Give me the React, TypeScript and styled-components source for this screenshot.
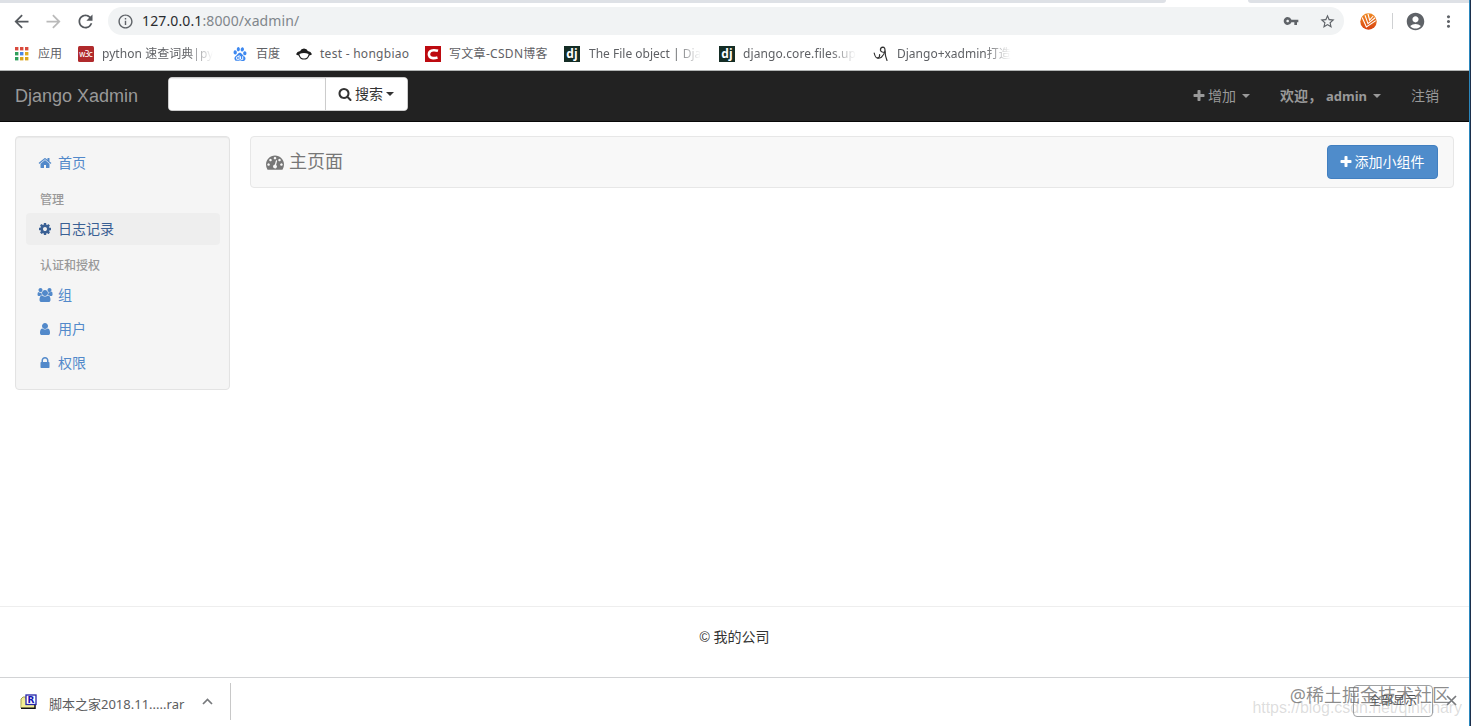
import React from 'react';
import styled, { createGlobalStyle } from 'styled-components';
import {
  MdArrowBack, MdArrowForward, MdRefresh, MdInfoOutline, MdVpnKey, MdStarBorder,
  MdAccountCircle, MdMoreVert,
} from 'react-icons/md';
import { SiBaidu } from 'react-icons/si';

const siteFont = '"Liberation Sans", "Noto Sans CJK SC", sans-serif';
const chromeFont = '"Noto Sans", "Noto Sans CJK SC", sans-serif';

const GlobalStyle = createGlobalStyle`
  * { box-sizing: border-box; }
  body { margin: 0; background: #fff; overflow: hidden; }
  svg { display: block; flex: none; }
`;

const paths = {
  plus: 'M1600 736v192q0 40-28 68t-68 28h-416v416q0 40-28 68t-68 28h-192q-40 0-68-28t-28-68v-416h-416q-40 0-68-28t-28-68v-192q0-40 28-68t68-28h416v-416q0-40 28-68t68-28h192q40 0 68 28t28 68v416h416q40 0 68 28t28 68z',
  search: 'M1216 832q0-185-131.5-316.5t-316.5-131.5-316.5 131.5-131.5 316.5 131.5 316.5 316.5 131.5 316.5-131.5 131.5-316.5zm512 832q0 52-38 90t-90 38q-54 0-90-38l-343-342q-179 124-399 124-143 0-273.5-55.5t-225-150-150-225-55.5-273.5 55.5-273.5 150-225 225-150 273.5-55.5 273.5 55.5 225 150 150 225 55.5 273.5q0 220-124 399l343 343q37 37 37 90z',
  home: 'M1472 992v480q0 26-19 45t-45 19h-384v-384h-256v384h-384q-26 0-45-19t-19-45v-480q0-1 .5-3t.5-3l575-474 575 474q1 2 1 6zm223-69l-62 74q-8 9-21 11h-3q-13 0-21-7l-692-577-692 577q-12 8-24 7-13-2-21-11l-62-74q-8-10-7-23.5t11-21.5l719-599q32-26 76-26t76 26l244 204v-195q0-14 9-23t23-9h192q14 0 23 9t9 23v408l219 182q10 8 11 21.5t-7 23.5z',
  cog: 'M1152 896q0-106-75-181t-181-75-181 75-75 181 75 181 181 75 181-75 75-181zm512-109v222q0 12-8 23t-20 13l-185 28q-19 54-39 91 35 50 107 138 10 12 10 25t-9 23q-27 37-99 108t-94 71q-12 0-26-9l-138-108q-44 23-91 38-16 136-29 186-7 28-36 28h-222q-14 0-24.5-8.5t-11.5-21.5l-28-184q-49-16-90-37l-141 107q-10 9-25 9-14 0-25-11-126-114-165-168-7-10-7-23 0-12 8-23 15-21 51-66.5t54-70.5q-27-50-41-99l-183-27q-13-2-21-12.5t-8-23.5v-222q0-12 8-23t19-13l186-28q14-46 39-92-40-57-107-138-10-12-10-24 0-10 9-23 26-36 98.5-107.5t94.5-71.5q13 0 26 10l138 107q44-23 91-38 16-136 29-186 7-28 36-28h222q14 0 24.5 8.5t11.5 21.5l28 184q49 16 90 37l142-107q9-9 24-9 13 0 25 10 129 119 165 170 7 8 7 22 0 12-8 23-15 21-51 66.5t-54 70.5q26 50 41 98l183 28q13 2 21 12.5t8 23.5z',
  user: 'M1536 1399q0 109-62.5 187t-150.5 78h-854q-88 0-150.5-78t-62.5-187q0-85 8.5-160.5t31.5-152 58.5-131 94-89 134.5-34.5q131 128 313 128t313-128q76 0 134.5 34.5t94 89 58.5 131 31.5 152 8.5 160.5zm-256-887q0 159-112.5 271.5t-271.5 112.5-271.5-112.5-112.5-271.5 112.5-271.5 271.5-112.5 271.5 112.5 112.5 271.5z',
  lock: 'M640 768h512v-192q0-106-75-181t-181-75-181 75-75 181v192zm832 96v576q0 40-28 68t-68 28h-960q-40 0-68-28t-28-68v-576q0-40 28-68t68-28h32v-192q0-184 132-316t316-132 316 132 132 316v192h32q40 0 68 28t28 68z',
  group: 'M657 896q-162 5-265 128h-134q-82 0-138-40.5t-56-118.5q0-353 124-353 6 0 43.5 21t97.5 42.5 119 21.5q67 0 133-23-5 37-5 66 0 159 90 322zm1071 637q0 120-73 189.5t-194 69.5h-874q-121 0-194-69.5t-73-189.5q0-53 3.5-103.5t14-109 26.5-108.5 43-97.5 62-81 85.5-53.5 111.5-20q10 0 43 21.5t73 48 107 48 135 21.5 135-21.5 107-48 73-48 43-21.5q61 0 111.5 20t85.5 53.5 62 81 43 97.5 26.5 108.5 14 109 3.5 103.5zm-1024-1277q0 106-75 181t-181 75-181-75-75-181 75-181 181-75 181 75 75 181zm704 384q0 159-112.5 271.5t-271.5 112.5-271.5-112.5-112.5-271.5 112.5-271.5 271.5-112.5 271.5 112.5 112.5 271.5zm576 225q0 78-56 118.5t-138 40.5h-134q-103-123-265-128 90-163 90-322 0-29-5-66 66 23 133 23 59 0 119-21.5t97.5-42.5 43.5-21q124 0 124 353zm-128-609q0 106-75 181t-181 75-181-75-75-181 75-181 181-75 181 75 75 181z',
  dashboard: 'M384 1152q0-53-37.5-90.5t-90.5-37.5-90.5 37.5-37.5 90.5 37.5 90.5 90.5 37.5 90.5-37.5 37.5-90.5zm192-448q0-53-37.5-90.5t-90.5-37.5-90.5 37.5-37.5 90.5 37.5 90.5 90.5 37.5 90.5-37.5 37.5-90.5zm428 481l101-382q6-26-7.5-48.5t-38.5-29.5-48 6.5-30 39.5l-101 382q-60 5-107 43.5t-63 98.5q-20 77 20 146t117 89 146-20 89-117q16-60-6-117t-72-91zm660-33q0-53-37.5-90.5t-90.5-37.5-90.5 37.5-37.5 90.5 37.5 90.5 90.5 37.5 90.5-37.5 37.5-90.5zm-640-640q0-53-37.5-90.5t-90.5-37.5-90.5 37.5-37.5 90.5 37.5 90.5 90.5 37.5 90.5-37.5 37.5-90.5zm448 192q0-53-37.5-90.5t-90.5-37.5-90.5 37.5-37.5 90.5 37.5 90.5 90.5 37.5 90.5-37.5 37.5-90.5zm320 448q0 261-141 483-19 29-54 29h-1402q-35 0-54-29-141-221-141-483 0-182 71-348t191-286 286-191 348-71 348 71 286 191 191 286 71 348z',
};

type IconName = keyof typeof paths;

const Icon = ({ name, size = 14 }: { name: IconName; size?: number }) => {
  const units = name === 'group' ? 2048 : 1792;
  return (
    <svg width={(size * units) / 1792} height={size} viewBox={`0 0 ${units} 1792`} fill="currentColor">
      <path d={paths[name]} />
    </svg>
  );
};

const Screen = styled.div`
  display: grid;
  grid-template-columns: 1fr 2px;
  width: 1471px;
  height: 726px;
  position: relative;
  overflow: hidden;
`;
const Window = styled.div`
  display: flex;
  flex-direction: column;
  min-width: 0;
`;
const DesktopEdge = styled.div`
  border-left: 1px solid #2b87bd;
  background: #1c2f4c;
`;

/* Browser chrome */
const TabStrip = styled.div`
  display: flex;
  justify-content: space-between;
  height: 3px;
  flex: none;
`;
const TabEdge = styled.div<{ $w: number; $side: 'left' | 'right' }>`
  width: ${p => p.$w}px;
  background: #dee1e6;
  border-radius: ${p => (p.$side === 'left' ? '0 0 4px 0' : '0 0 0 4px')};
`;
const Toolbar = styled.div`
  display: flex;
  align-items: center;
  height: 36px;
  flex: none;
  padding: 0 0 0 11px;
  color: #5f6368;
`;
const NavButton = styled.span<{ $faded?: boolean }>`
  width: 32px;
  color: ${p => (p.$faded ? '#bababa' : '#55595e')};
`;
const AddressBar = styled.div`
  display: flex;
  align-items: center;
  width: 1236px;
  height: 28px;
  margin-left: 1px;
  padding: 0 8px 0 9px;
  border-radius: 14px;
  background: #f1f3f4;
`;
const Url = styled.span`
  flex: 1;
  margin-left: 8px;
  font: 14px/20px ${chromeFont};
  letter-spacing: 0.12px;
  color: #80868b;
  b { font-weight: 400; color: #2a2c2f; }
`;
const AddressActions = styled.div`
  display: flex;
  gap: 20px;
  align-items: center;
`;
const Extensions = styled.div`
  display: flex;
  align-items: center;
  margin-left: 16px;
`;
const Divider = styled.i`
  width: 1px;
  height: 16px;
  margin: 0 12px 0 15px;
  background: #cfd1d3;
`;
const MenuSlot = styled.span`
  margin-left: 13px;
`;
const BookmarkBar = styled.div`
  display: flex;
  align-items: center;
  height: 32px;
  flex: none;
  padding: 0 0 2px 15px;
  border-bottom: 1px solid #b2b5b4;
`;
const Bookmark = styled.div<{ $w: number }>`
  display: flex;
  align-items: center;
  width: ${p => p.$w}px;
`;
const BookmarkIcon = styled.span<{ $w: number }>`
  width: ${p => p.$w}px;
  flex: none;
`;
const BookmarkLabel = styled.span<{ $fade?: boolean; $track?: number }>`
  white-space: nowrap;
  font: 12px/18px ${chromeFont};
  letter-spacing: ${p => p.$track ?? 0}px;
  color: #5f6165;
  ${p => p.$fade && 'mask-image: linear-gradient(to right, #000 calc(100% - 26px), transparent);'}
`;

/* Site navigation */
const Navbar = styled.header`
  display: flex;
  align-items: center;
  height: 51px;
  flex: none;
  padding: 0 30px 0 15px;
  background: #222;
  border-bottom: 1px solid #080808;
  font: 14px/20px ${siteFont};
  color: #999;
`;
const Brand = styled.div`
  width: 153px;
  font-size: 18px;
`;
const SearchGroup = styled.div`
  display: flex;
  width: 240px;
  height: 34px;
  margin-bottom: 4px;
  border-radius: 4px;
  background: #fff;
  border: 1px solid #ccc;
  overflow: hidden;
`;
const SearchInput = styled.input`
  width: 157px;
  border: 0;
  border-right: 1px solid #ccc;
  padding: 0 12px;
  box-shadow: inset 0 1px 1px rgba(0, 0, 0, 0.075);
`;
const SearchButton = styled.button`
  flex: 1;
  display: flex;
  align-items: center;
  justify-content: center;
  gap: 3px;
  padding: 0 1px 0 0;
  border: 0;
  background: #fff;
  color: #333;
  font: 14px/20px ${siteFont};
`;
const Caret = styled.i`
  border: 4px solid transparent;
  border-top-color: currentColor;
  border-bottom: 0;
`;
const UserMenu = styled.nav`
  display: flex;
  gap: 30px;
  margin-left: auto;
`;
const MenuItem = styled.span<{ $bold?: boolean }>`
  display: flex;
  align-items: center;
  gap: ${p => (p.$bold ? 6 : 2)}px;
  font-weight: ${p => (p.$bold ? 700 : 400)};
  white-space: nowrap;
  ${Caret} { margin-left: ${p => (p.$bold ? 0 : 4)}px; }
`;
const Welcome = styled.span`
  display: flex;
  gap: 4px;
  b { font: 700 13px/20px ${chromeFont}; letter-spacing: 0; }
`;

/* Page content */
const Content = styled.main`
  display: flex;
  align-items: flex-start;
  gap: 20px;
  height: 484px;
  flex: none;
  padding: 14px 15px 0;
  font: 14px/20px ${siteFont};
`;
const Sidebar = styled.aside`
  width: 215px;
  height: 254px;
  padding: 10px 9px 0 10px;
  background: #f5f5f5;
  border: 1px solid #e3e3e3;
  border-radius: 4px;
  box-shadow: inset 0 1px 1px rgba(0, 0, 0, 0.05);
`;
const SideHeading = styled.div`
  height: 33px;
  margin-top: -1px;
  padding: 11px 15px 0 14px;
  font-size: 12px;
  line-height: 18px;
  font-weight: 500;
  color: #999;
`;
const SideLink = styled.a<{ $active?: boolean }>`
  display: flex;
  align-items: center;
  height: 32px;
  margin-bottom: 2px;
  padding-left: 10px;
  border-radius: 4px;
  color: ${p => (p.$active ? '#3a6094' : '#5289ca')};
  background: ${p => (p.$active ? '#eee' : 'transparent')};
`;
const SideIcon = styled.span`
  display: flex;
  justify-content: center;
  width: 18px;
  margin-right: 4px;
`;
const PageHeader = styled.section`
  display: flex;
  align-items: center;
  justify-content: space-between;
  flex: 1;
  height: 52px;
  padding: 0 15px;
  background: #f8f8f8;
  border: 1px solid #e7e7e7;
  border-radius: 4px;
`;
const PageTitle = styled.h1`
  display: flex;
  align-items: center;
  gap: 5px;
  margin: 0;
  font: 18px/20px ${siteFont};
  color: #777;
`;
const AddButton = styled.button`
  display: flex;
  align-items: center;
  justify-content: center;
  gap: 2px;
  width: 111px;
  height: 34px;
  padding: 0 2px 0 0;
  background: #4f8ccb;
  border: 1px solid #417fc0;
  border-radius: 4px;
  color: #fff;
  font: 14px/20px ${siteFont};
`;
const Footer = styled.footer`
  height: 71px;
  flex: none;
  padding-top: 20px;
  border-top: 1px solid #eee;
  text-align: center;
  font: 14px/20px ${siteFont};
  color: #333;
`;

/* Download shelf */
const Shelf = styled.div`
  display: flex;
  flex: 1;
  justify-content: space-between;
  border-top: 1px solid #d2d3d5;
  padding: 5px 12px 6px 0;
`;
const Download = styled.div`
  display: flex;
  align-items: center;
  width: 231px;
  height: 37px;
  padding-left: 20px;
  border-right: 1px solid #c8c8c8;
  font: 13px/18px ${chromeFont};
  color: #5c5d60;
`;
const FileName = styled.span`
  width: 153px;
  margin: 4px 0 0 12px;
  white-space: nowrap;
`;
const ShelfActions = styled.div`
  display: flex;
  align-items: center;
  gap: 13px;
  padding-bottom: 2px;
`;
const ShowAll = styled.button`
  width: 80px;
  height: 32px;
  padding: 0;
  background: transparent;
  border: 1px solid #9fa1a3;
  border-radius: 4px;
  font: 12px/18px ${chromeFont};
  color: #4a4c4f;
`;
const Watermark = styled.div<{ $soft?: boolean }>`
  position: absolute;
  right: ${p => (p.$soft ? 9 : 21)}px;
  bottom: ${p => (p.$soft ? 6 : 19)}px;
  font: ${p => (p.$soft ? 16 : 18)}px/24px ${p => (p.$soft ? siteFont : chromeFont)};
  letter-spacing: ${p => (p.$soft ? -0.07 : 0)}px;
  color: ${p => (p.$soft ? 'rgba(150,150,150,.32)' : 'rgba(95,95,95,.72)')};
  white-space: nowrap;
  pointer-events: none;
`;

const AppsGlyph = () => {
  const colors = ['#d94a3d', '#d94a3d', '#d94a3d', '#2f9e5b', '#4a86e8', '#e0a920', '#2f9e5b', '#dba51f', '#dba51f'];
  return (
    <svg width="14" height="14">
      {colors.map((c, i) => <rect key={i} x={(i % 3) * 5} y={Math.floor(i / 3) * 5} width="3.4" height="3.4" fill={c} />)}
    </svg>
  );
};
const W3cGlyph = () => (
  <svg width="16" height="16">
    <rect width="16" height="16" rx="1.5" fill="#b02a2c" />
    <text x="8" y="11" textAnchor="middle" fontSize="8" textLength="14" fill="#fff" fontFamily="DejaVu Sans">w3c</text>
  </svg>
);
const MaskGlyph = () => (
  <svg width="16" height="16" viewBox="0 0 16 16">
    <path d="M0 8.2Q1 5.4 4.2 5 5 2.5 8 2.5t3.8 2.5Q15 5.4 16 8.2 15 9 13.4 9.4 12 13.6 8 13.6T2.6 9.4Q1 9 0 8.2Z" fill="#1d1d1d" />
    <path d="M3.4 8Q8 5.9 12.6 8 11.8 12.5 8 12.5T3.4 8Z" fill="#fff" />
  </svg>
);
const CsdnGlyph = () => (
  <svg width="16" height="16">
    <rect width="16" height="16" fill="#bd0a10" />
    <path d="M13 4.8Q10.8 4.1 8.6 4.2 4 4.4 3.9 8.3 4 12 8 12.1q2.3.1 4.5-.6" fill="none" stroke="#fff" strokeWidth="2.6" />
  </svg>
);
const DjangoGlyph = () => (
  <svg width="16" height="16">
    <rect width="16" height="16" fill="#142d25" />
    <text x="8" y="12" textAnchor="middle" fontSize="12" fontWeight="700" fill="#fff" fontFamily="Open Sans">dj</text>
  </svg>
);
const PenGlyph = () => (
  <svg width="16" height="16" fill="none" stroke="#333" strokeWidth="1.2" strokeLinecap="round">
    <path d="M1.2 7Q2.2 12 4.6 12 7 11.6 6.6 8.6" />
    <path d="M12 6.5Q8 6.5 7.4 4.2 7.4 1.4 9.8 1.2 12.2 1.4 12 5 11.4 8.4 8.4 11.2 5.8 12.8 4.6 12" />
    <path d="M12 5Q12.2 10.5 14 14.5" />
  </svg>
);
const ExtensionGlyph = () => (
  <svg width="17" height="17" viewBox="0 0 17 17">
    <defs>
      <linearGradient id="ember" x1="0" y1="0" x2="0" y2="1">
        <stop stopColor="#f08a24" />
        <stop offset="1" stopColor="#d8420f" />
      </linearGradient>
    </defs>
    <circle cx="8.5" cy="8.5" r="8.2" fill="url(#ember)" />
    <path d="M2.2 4.5 6.4 14 15.8 7.6M5 2.2 8 10.6 15.2 4.8M8 .8 9.6 7 13.2 3" fill="none" stroke="#fff" strokeWidth="1.1" />
  </svg>
);
const RarGlyph = () => (
  <svg width="17" height="16">
    <path d="M1 14V5l2-2h3v11Z" fill="#f2ed94" stroke="#a29f4e" />
    <path d="M3 5h3v6h9v3H1Z" fill="#f2ed94" />
    <path d="M1 14.2h14V11" fill="none" stroke="#111" strokeWidth="1.5" />
    <rect x="6" y="1" width="10" height="9.5" fill="#fff" stroke="#2424a8" strokeWidth="1.3" />
    <text x="11" y="9" textAnchor="middle" fontSize="9" fontWeight="700" fill="#1515b5" fontFamily="DejaVu Sans">R</text>
  </svg>
);

const bookmarks = [
  { w: 63, iw: 23, icon: <AppsGlyph />, label: '应用' },
  { w: 155, iw: 24, icon: <W3cGlyph />, label: 'python 速查词典|py', fade: true, track: 0.05 },
  { w: 63, iw: 23, icon: <SiBaidu size={14} color="#3d88f0" />, label: '百度' },
  { w: 129, iw: 24, icon: <MaskGlyph />, label: 'test - hongbiao', track: 0.27 },
  { w: 139, iw: 24, icon: <CsdnGlyph />, label: '写文章-CSDN博客', track: 0.3 },
  { w: 155, iw: 25, icon: <DjangoGlyph />, label: 'The File object | Dja', fade: true },
  { w: 154, iw: 24, icon: <DjangoGlyph />, label: 'django.core.files.up', fade: true, track: 0.1 },
  { w: 140, iw: 24, icon: <PenGlyph />, label: 'Django+xadmin打造', fade: true },
];

const SideItem = ({ icon, children, active }: { icon: IconName; children: React.ReactNode; active?: boolean }) => (
  <SideLink $active={active}><SideIcon><Icon name={icon} /></SideIcon>{children}</SideLink>
);

export default function App() {
  return (
    <Screen>
      <GlobalStyle />
      <Window>
        <TabStrip><TabEdge $w={1166} $side="left" /><TabEdge $w={221} $side="right" /></TabStrip>
        <Toolbar>
          <NavButton><MdArrowBack size={21} /></NavButton>
          <NavButton $faded><MdArrowForward size={21} /></NavButton>
          <NavButton><MdRefresh size={21} /></NavButton>
          <AddressBar>
            <MdInfoOutline size={17} />
            <Url><b>127.0.0.1</b>:8000/xadmin/</Url>
            <AddressActions><MdVpnKey size={16} /><MdStarBorder size={17} /></AddressActions>
          </AddressBar>
          <Extensions>
            <ExtensionGlyph />
            <Divider />
            <MdAccountCircle size={21} />
            <MenuSlot><MdMoreVert size={19} /></MenuSlot>
          </Extensions>
        </Toolbar>
        <BookmarkBar>
          {bookmarks.map((b, i) => (
            <Bookmark key={i} $w={b.w}>
              <BookmarkIcon $w={b.iw}>{b.icon}</BookmarkIcon>
              <BookmarkLabel $fade={b.fade} $track={b.track}>{b.label}</BookmarkLabel>
            </Bookmark>
          ))}
        </BookmarkBar>
        <Navbar>
          <Brand>Django Xadmin</Brand>
          <SearchGroup>
            <SearchInput />
            <SearchButton><Icon name="search" />搜索<Caret /></SearchButton>
          </SearchGroup>
          <UserMenu>
            <MenuItem><Icon name="plus" />增加<Caret /></MenuItem>
            <MenuItem $bold><Welcome>欢迎，<b>admin</b></Welcome><Caret /></MenuItem>
            <MenuItem>注销</MenuItem>
          </UserMenu>
        </Navbar>
        <Content>
          <Sidebar>
            <SideItem icon="home">首页</SideItem>
            <SideHeading>管理</SideHeading>
            <SideItem icon="cog" active>日志记录</SideItem>
            <SideHeading>认证和授权</SideHeading>
            <SideItem icon="group">组</SideItem>
            <SideItem icon="user">用户</SideItem>
            <SideItem icon="lock">权限</SideItem>
          </Sidebar>
          <PageHeader>
            <PageTitle><Icon name="dashboard" size={18} />主页面</PageTitle>
            <AddButton><Icon name="plus" />添加小组件</AddButton>
          </PageHeader>
        </Content>
        <Footer>© 我的公司</Footer>
        <Shelf>
          <Download>
            <RarGlyph />
            <FileName>脚本之家2018.11.....rar</FileName>
            <svg width="11" height="7" fill="none" stroke="#77797c" strokeWidth="1.7"><path d="M1 6 5.5 1.5 10 6" /></svg>
          </Download>
          <ShelfActions>
            <ShowAll>全部显示</ShowAll>
            <svg width="11" height="11" fill="none" stroke="#77797c" strokeWidth="1.7"><path d="m1 1 9 9M10 1 1 10" /></svg>
          </ShelfActions>
        </Shelf>
      </Window>
      <DesktopEdge />
      <Watermark $soft>https://blog.csdn.net/qinkinary</Watermark>
      <Watermark>@稀土掘金技术社区</Watermark>
    </Screen>
  );
}
